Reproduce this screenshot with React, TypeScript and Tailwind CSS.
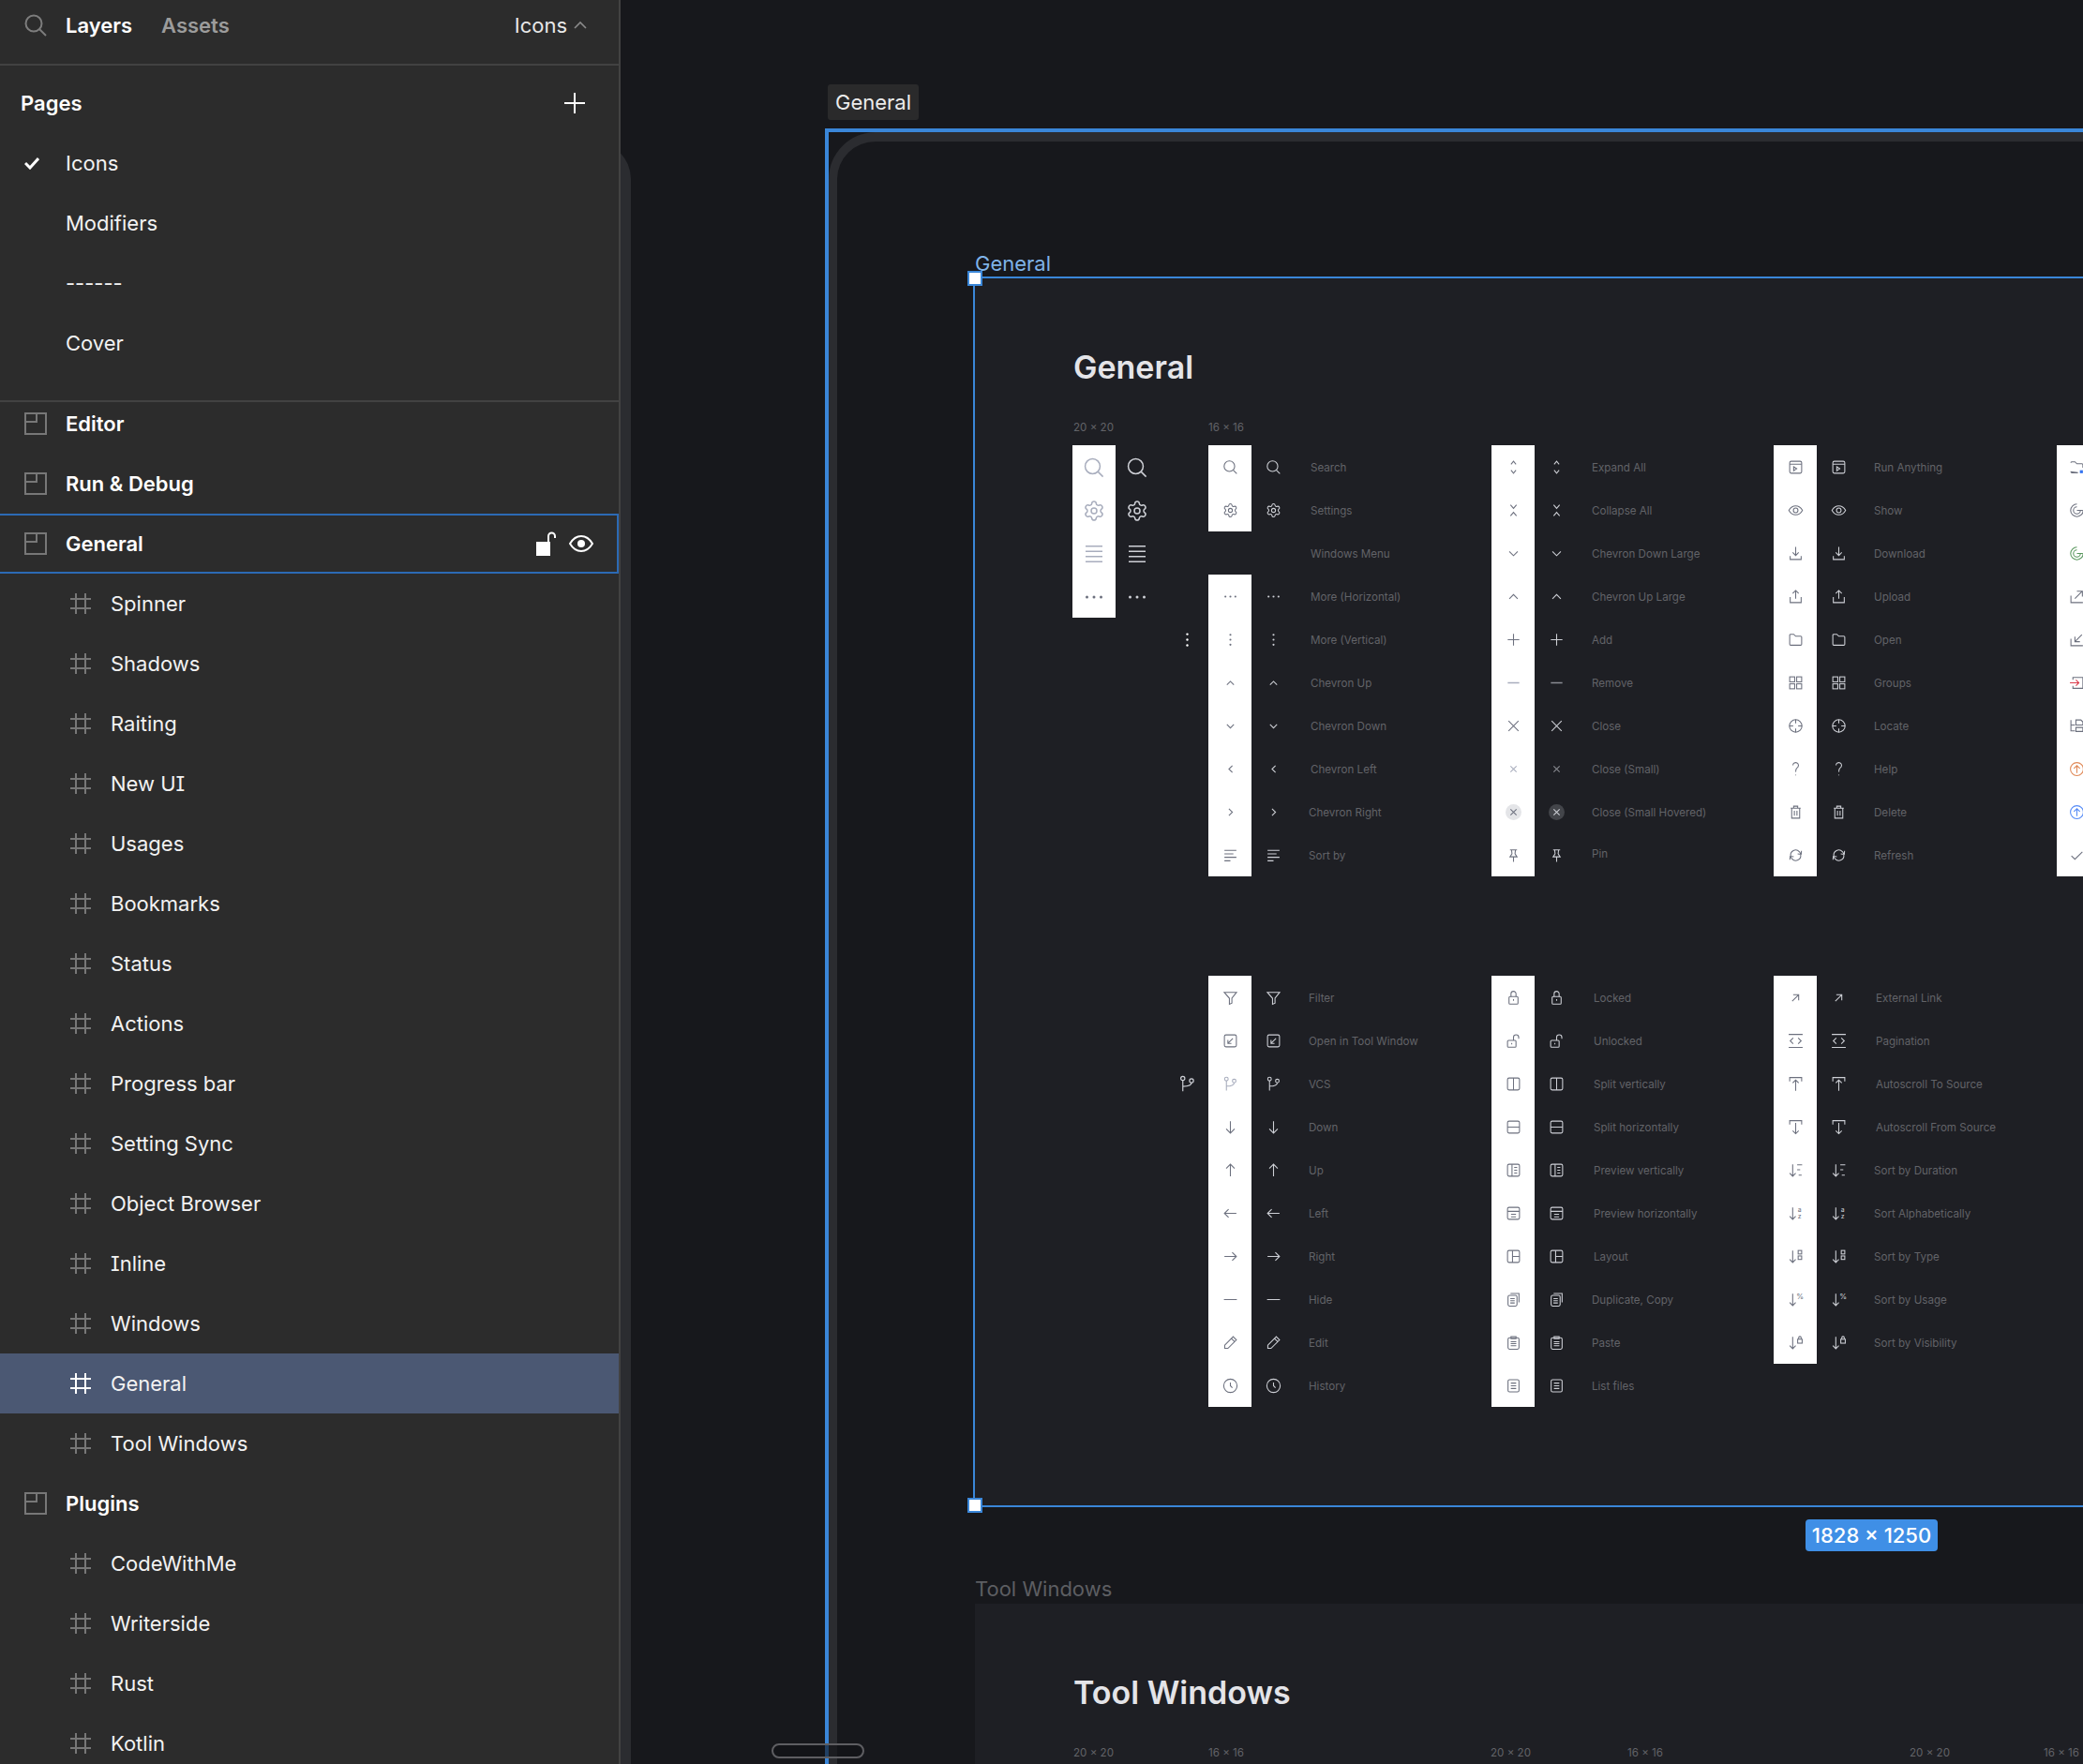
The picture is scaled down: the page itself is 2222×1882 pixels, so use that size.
import React from 'react';

// Icon strokes, all on a 16 x 16 grid
const folder = 'M2 3.5a1 1 0 0 1 1-1h3l2 2h5a1 1 0 0 1 1 1v7a1 1 0 0 1-1 1H3a1 1 0 0 1-1-1z';
const sortArrow = 'M5 2v12M2 11l3 3 3-3';
const box = <rect x="2" y="2" width="12" height="12" rx="1.5" />;

const glyphs: Record<string, React.ReactNode> = {
  search: <><circle cx="7" cy="7" r="5.3" /><path d="M10.9 10.9 14.4 14.4" /></>,
  settings: (
    <g transform="scale(0.667)" strokeWidth="1.5">
      <path d="M9.671 4.136a2.34 2.34 0 0 1 4.659 0 2.34 2.34 0 0 0 3.319 1.915 2.34 2.34 0 0 1 2.33 4.033 2.34 2.34 0 0 0 0 3.831 2.34 2.34 0 0 1-2.33 4.033 2.34 2.34 0 0 0-3.319 1.915 2.34 2.34 0 0 1-4.659 0 2.34 2.34 0 0 0-3.32-1.915 2.34 2.34 0 0 1-2.33-4.033 2.34 2.34 0 0 0 0-3.831A2.34 2.34 0 0 1 6.35 6.051a2.34 2.34 0 0 0 3.32-1.915" />
      <circle cx="12" cy="12" r="3" />
    </g>
  ),
  menu: <path d="M2 2.5h12M2 6.2h12M2 9.8h12M2 13.5h12" />,
  moreH: <g fill="currentColor" stroke="none"><circle cx="3" cy="8" r="1" /><circle cx="8" cy="8" r="1" /><circle cx="13" cy="8" r="1" /></g>,
  moreV: <g fill="currentColor" stroke="none"><circle cx="8" cy="3" r="1" /><circle cx="8" cy="8" r="1" /><circle cx="8" cy="13" r="1" /></g>,
  chevronUp: <path d="M4.5 10 8 6.5l3.5 3.5" />,
  chevronDown: <path d="M4.5 6.5 8 10l3.5-3.5" />,
  chevronLeft: <path d="M10 4.5 6.5 8l3.5 3.5" />,
  chevronRight: <path d="M6.5 4.5 10 8l-3.5 3.5" />,
  sortBy: <path d="M2 3h12M2 6.5h9M2 10h12M2 13.5h6" />,
  expandAll: <path d="M5.5 5 8 2l2.5 3M5.5 11 8 14l2.5-3" />,
  collapseAll: <path d="M5 2.5 8 6l3-3.5M5 13.5 8 10l3 3.5" />,
  chevronDownLarge: <path d="M3.8 6 8 10.2 12.2 6" />,
  chevronUpLarge: <path d="M3.8 10.2 8 6l4.2 4.2" />,
  add: <path d="M8 2.2v11.6M2.2 8h11.6" />,
  remove: <path d="M2.2 8h11.6" strokeWidth="1.4" />,
  close: <path d="M3 3l10 10M13 3 3 13" />,
  closeSmall: <path d="M5 5l6 6M11 5l-6 6" />,
  pin: <path d="M4.5 2.5h7M6 2.5l.5 4-2 3h7l-2-3 .5-4M8 9.5V14.5" />,
  runAnything: <><rect x="2" y="2" width="12" height="12" rx="1.5" /><path d="M2 5h12M6 7.5l3 2-3 2z" /></>,
  show: <><path d="M1.2 8C2.8 5 5.2 3.5 8 3.5s5.2 1.5 6.8 4.5c-1.6 3-4 4.5-6.8 4.5S2.8 11 1.2 8z" /><circle cx="8" cy="8" r="2.3" /></>,
  download: <path d="M8 1.5v8.5M5 7l3 3 3-3M2.5 10.5V14h11v-3.5" />,
  upload: <path d="M8 10V1.8M5 4.8l3-3 3 3M2.5 8.5V14h11V8.5" />,
  open: <path d={folder} />,
  groups: <><rect x="2" y="2" width="5" height="5" /><rect x="9" y="2" width="5" height="5" /><rect x="2" y="9" width="5" height="5" /><rect x="9" y="9" width="5" height="5" /></>,
  locate: <><circle cx="8" cy="8" r="6.3" /><path d="M8 1.7v3.8M8 10.5v3.8M1.7 8h3.8M10.5 8h3.8" /></>,
  help: <path d="M5.2 4.3a2.8 2.8 0 1 1 4.3 2.4C8.4 7.5 8 8.5 8 10.8M8 13.6v.8" />,
  delete: <path d="M3 4h10M6 4V2h4v2M4 4v10h8V4M6.7 6.5v5M9.3 6.5v5" />,
  refresh: <path d="M3 8.5a5 5 0 0 1 8.6-4.2L13.5 7M13.8 3.5 13.5 7 10 6.5M13 7.5a5 5 0 0 1-8.6 4.2L2.5 9M2.2 12.5 2.5 9 6 9.5" />,
  folderDot: <><path d="M2 3.5a1 1 0 0 1 1-1h3l2 2h5a1 1 0 0 1 1 1v3M9 13.5H3a1 1 0 0 1-1-1z" /><rect x="11" y="11" width="3" height="3" fill="#3574f0" stroke="none" /></>,
  coverage: <><path d="M8 1.7a6.3 6.3 0 1 0 6.3 6.3" /><path d="M8 4.5A3.5 3.5 0 1 0 11.5 8M8 8h6" /></>,
  coverageOn: <g stroke="#57965c"><path d="M8 1.7a6.3 6.3 0 1 0 6.3 6.3" /><path d="M8 4.5A3.5 3.5 0 1 0 11.5 8M8 8h6" /></g>,
  exportOut: <path d="M2 7v7h12M6 10l7-7M8 2.5h5.5V8" />,
  importIn: <path d="M2 7v7h12M13 3l-7 7M6 5v5h5" />,
  loginRed: <><path d="M4 5V2.5h10v11H4V11" /><path d="M1 8h9M7 5l3 3-3 3" stroke="#db3b4b" /></>,
  hierarchy: <path d="M2 2v11h4M2 7h4M7 2h5l2 2v3H7zM7 9.5h7v4H7z" />,
  upOrange: <><circle cx="8" cy="8" r="6.5" stroke="#e08855" /><path d="M8 12V4.5M5 7.5l3-3 3 3" stroke="#e08855" /></>,
  upBlue: <><circle cx="8" cy="8" r="6.5" stroke="#548af7" /><path d="M8 12V4.5M5 7.5l3-3 3 3" stroke="#548af7" /></>,
  check: <path d="M2.5 8.5 6 12l7.5-7.5" />,
  filter: <path d="M1.8 2.5h12.4L9.5 8.5v4.8L7 14.5V8.5z" />,
  openTool: <>{box}<path d="M10.5 5.5l-5 5M5.5 7v3.5H9" /></>,
  vcs: <><circle cx="4" cy="3" r="1.8" /><circle cx="11.8" cy="5" r="1.8" /><path d="M4 4.8v9.7M11.8 6.8c0 2.6-3 3.4-7.8 3.4" /></>,
  down: <path d="M8 2v12M3.8 9.8 8 14l4.2-4.2" />,
  up: <path d="M8 14V2M3.8 6.2 8 2l4.2 4.2" />,
  left: <path d="M14 8H2M6.2 3.8 2 8l4.2 4.2" />,
  right: <path d="M2 8h12M9.8 3.8 14 8l-4.2 4.2" />,
  hide: <path d="M1.5 8h13" />,
  edit: <path d="M10.8 2 14 5.2 5.5 13.7H2.3v-3.2zM9 3.8l3.2 3.2" />,
  history: <><circle cx="8" cy="8" r="6.7" /><path d="M8 4.8V8l2 2" /></>,
  locked: <><rect x="3.5" y="6.8" width="9" height="7.5" rx="1" /><path d="M5.5 6.8V4a2.5 2.5 0 0 1 5 0v2.8M8 9.5v1.6" /></>,
  unlocked: <><rect x="2" y="7.5" width="8.5" height="6.8" rx="1" /><path d="M8 7.5V4.5a2.6 2.6 0 0 1 5.2 0v1.3M6.2 10v1.6" /></>,
  splitV: <>{box}<path d="M8 2v12" /></>,
  splitH: <>{box}<path d="M2 8h12" /></>,
  previewV: <>{box}<path d="M6.5 2v12M8.7 5.2h3M8.7 8h3M8.7 10.8h3" /></>,
  previewH: <>{box}<path d="M2 6h12M5.5 9h5M5.5 11.5h5" /></>,
  layout: <>{box}<path d="M7 2v12M7 8h7" /></>,
  duplicate: <><rect x="2.5" y="3.8" width="9" height="10.7" rx="1.5" /><path d="M5 1.8h8.5v9M4.8 7h4.4M4.8 9.2h4.4M4.8 11.4h4.4" /></>,
  paste: <><rect x="2.5" y="3" width="11" height="11.5" rx="1.5" /><path d="M5.5 1.8h5V4h-5zM5.2 7h5.6M5.2 9h5.6M5.2 11h5.6" /></>,
  listFiles: <><rect x="2.5" y="1.8" width="11" height="12.4" rx="1.5" /><path d="M5.3 5.3h5.4M5.3 8h5.4M5.3 10.7h5.4" /></>,
  external: <path d="M4.5 11.5l6.5-6.5M5.5 5H11v5.5" />,
  pagination: <path d="M1 1.5h14M1 14.5h14M5.5 5 2.5 8l3 3M10.5 5l3 3-3 3" />,
  autoscrollTo: <path d="M2 5.5v-4h12v4M8 14.8V4M5 7l3-3 3 3" />,
  autoscrollFrom: <path d="M2 5.5v-4h12v4M8 3.8v10.8M5 11.6l3 3 3-3" />,
  sortDuration: <path d={sortArrow + 'M9.5 2.5h5M9.5 7.5h3M11 13h3'} />,
  sortAlpha: <><path d={sortArrow} /><text x="10" y="7" fontSize="6.5" fill="currentColor" stroke="none" fontFamily="Inter, sans-serif">a</text><text x="10" y="13.5" fontSize="6.5" fill="currentColor" stroke="none" fontFamily="Inter, sans-serif">z</text></>,
  sortType: <><path d={sortArrow} /><rect x="10.5" y="2" width="3.5" height="3.5" /><rect x="10.5" y="7.5" width="3.5" height="3.5" /></>,
  sortUsage: <><path d={sortArrow} /><text x="8.8" y="7.5" fontSize="7.5" fill="currentColor" stroke="none" fontFamily="Inter, sans-serif">%</text></>,
  sortVisibility: <><path d={sortArrow} /><rect x="10" y="4.5" width="4.5" height="4" /><path d="M11 4.5V3a1.2 1.2 0 0 1 2.5 0v1.5" /></>,
};

function Icon({ name, large }: { name: string; large?: boolean }) {
  return (
    <svg
      viewBox="0 0 16 16"
      fill="none"
      stroke="currentColor"
      strokeWidth="1"
      className={large ? 'h-[24px] w-[24px]' : 'h-[19px] w-[19px]'}
    >
      {glyphs[name]}
    </svg>
  );
}

interface Item {
  icon?: string;
  label?: string;
  pad?: string;
  soft?: boolean;
  pale?: boolean;
  hover?: boolean;
}

// white swatch, dark swatch, caption
function IconRow({ item }: { item: Item }) {
  return (
    <div className="flex h-[46px] items-center">
      <div className={`flex h-[46px] w-[46px] items-center justify-center pt-px ${item.icon ? 'bg-white' : ''} ${item.soft || item.pale ? 'text-[#a8adbd]' : 'text-[#6c707e]'}`}>
        {item.icon && (
          <span className={`flex h-[17px] w-[17px] items-center justify-center ${item.hover ? 'rounded-full bg-[#e4e5e8]' : ''}`}>
            <Icon name={item.icon} />
          </span>
        )}
      </div>
      <div className={`flex h-[46px] w-[46px] items-center justify-center pt-px ${item.soft ? 'text-[#8b8d93]' : 'text-[#ced0d6]'}`}>
        {item.icon && (
          <span className={`flex h-[17px] w-[17px] items-center justify-center ${item.hover ? 'rounded-full bg-[#43454a]' : ''}`}>
            <Icon name={item.icon} />
          </span>
        )}
      </div>
      <span className={`mt-[3px] whitespace-nowrap text-[11.6px] leading-none text-[#626368] ${item.pad ?? 'pl-[15px]'}`}>{item.label}</span>
    </div>
  );
}

function IconColumn({ items, width }: { items: Item[]; width: string }) {
  return (
    <div className={`flex shrink-0 flex-col ${width}`}>
      {items.map((item, i) => (
        <IconRow key={i} item={item} />
      ))}
    </div>
  );
}

const sizeOne: Item[] = [
  { icon: 'search', label: 'Search', pad: 'pl-[17px]' },
  { icon: 'settings', label: 'Settings', pad: 'pl-[17px]' },
  { label: 'Windows Menu', pad: 'pl-[17px]' },
  { icon: 'moreH', label: 'More (Horizontal)', pad: 'pl-[17px]' },
  { icon: 'moreV', label: 'More (Vertical)', pad: 'pl-[17px]' },
  { icon: 'chevronUp', label: 'Chevron Up', pad: 'pl-[17px]' },
  { icon: 'chevronDown', label: 'Chevron Down', pad: 'pl-[17px]' },
  { icon: 'chevronLeft', label: 'Chevron Left', pad: 'pl-[17px]' },
  { icon: 'chevronRight', label: 'Chevron Right' },
  { icon: 'sortBy', label: 'Sort by' },
];

const sizeTwo: Item[] = [
  { icon: 'expandAll', label: 'Expand All' },
  { icon: 'collapseAll', label: 'Collapse All' },
  { icon: 'chevronDownLarge', label: 'Chevron Down Large' },
  { icon: 'chevronUpLarge', label: 'Chevron Up Large' },
  { icon: 'add', label: 'Add' },
  { icon: 'remove', label: 'Remove', soft: true },
  { icon: 'close', label: 'Close' },
  { icon: 'closeSmall', label: 'Close (Small)', soft: true },
  { icon: 'closeSmall', label: 'Close (Small Hovered)', hover: true },
  { icon: 'pin', label: 'Pin', pad: 'pl-[15px] -translate-y-[2px]' },
];

const sizeThree: Item[] = [
  { icon: 'runAnything', label: 'Run Anything' },
  { icon: 'show', label: 'Show' },
  { icon: 'download', label: 'Download' },
  { icon: 'upload', label: 'Upload' },
  { icon: 'open', label: 'Open' },
  { icon: 'groups', label: 'Groups' },
  { icon: 'locate', label: 'Locate' },
  { icon: 'help', label: 'Help' },
  { icon: 'delete', label: 'Delete' },
  { icon: 'refresh', label: 'Refresh' },
];

const sizeFour: Item[] = [
  { icon: 'folderDot' },
  { icon: 'coverage' },
  { icon: 'coverageOn' },
  { icon: 'exportOut' },
  { icon: 'importIn' },
  { icon: 'loginRed' },
  { icon: 'hierarchy' },
  { icon: 'upOrange' },
  { icon: 'upBlue' },
  { icon: 'check' },
];

const lowerOne: Item[] = [
  { icon: 'filter', label: 'Filter' },
  { icon: 'openTool', label: 'Open in Tool Window' },
  { icon: 'vcs', label: 'VCS', pale: true },
  { icon: 'down', label: 'Down' },
  { icon: 'up', label: 'Up' },
  { icon: 'left', label: 'Left' },
  { icon: 'right', label: 'Right' },
  { icon: 'hide', label: 'Hide' },
  { icon: 'edit', label: 'Edit' },
  { icon: 'history', label: 'History' },
];

const lowerTwo: Item[] = [
  { icon: 'locked', label: 'Locked', pad: 'pl-[17px]' },
  { icon: 'unlocked', label: 'Unlocked', pad: 'pl-[17px]' },
  { icon: 'splitV', label: 'Split vertically', pad: 'pl-[17px]' },
  { icon: 'splitH', label: 'Split horizontally', pad: 'pl-[17px]' },
  { icon: 'previewV', label: 'Preview vertically', pad: 'pl-[17px]' },
  { icon: 'previewH', label: 'Preview horizontally', pad: 'pl-[17px]' },
  { icon: 'layout', label: 'Layout', pad: 'pl-[17px]' },
  { icon: 'duplicate', label: 'Duplicate, Copy' },
  { icon: 'paste', label: 'Paste' },
  { icon: 'listFiles', label: 'List files' },
];

const lowerThree: Item[] = [
  { icon: 'external', label: 'External Link', pad: 'pl-[17px]' },
  { icon: 'pagination', label: 'Pagination', pad: 'pl-[17px]' },
  { icon: 'autoscrollTo', label: 'Autoscroll To Source', pad: 'pl-[17px]' },
  { icon: 'autoscrollFrom', label: 'Autoscroll From Source', pad: 'pl-[17px]' },
  { icon: 'sortDuration', label: 'Sort by Duration' },
  { icon: 'sortAlpha', label: 'Sort Alphabetically' },
  { icon: 'sortType', label: 'Sort by Type' },
  { icon: 'sortUsage', label: 'Sort by Usage' },
  { icon: 'sortVisibility', label: 'Sort by Visibility' },
];

const largeIcons = ['search', 'settings', 'menu', 'moreH'];

const frames = [
  'Spinner', 'Shadows', 'Raiting', 'New UI', 'Usages', 'Bookmarks', 'Status', 'Actions',
  'Progress bar', 'Setting Sync', 'Object Browser', 'Inline', 'Windows', 'General', 'Tool Windows',
];
const pluginFrames = ['CodeWithMe', 'Writerside', 'Rust', 'Kotlin'];

function SectionIcon() {
  return (
    <svg viewBox="0 0 24 24" fill="none" stroke="#777" strokeWidth="2" className="h-[24px] w-[24px] shrink-0">
      <rect x="1" y="1" width="22" height="22" />
      <path d="M13 1v9H1" />
    </svg>
  );
}

function FrameIcon({ active }: { active?: boolean }) {
  return (
    <svg viewBox="0 0 24 24" fill="none" stroke={active ? '#fff' : '#777'} strokeWidth="2" className="h-[24px] w-[24px] shrink-0">
      <path d="M7 1v22M17 1v22M1 7h22M1 17h22" />
    </svg>
  );
}

function SectionRow({ label, children, active }: { label: string; children?: React.ReactNode; active?: boolean }) {
  return (
    <div className={`flex h-16 items-center pl-[26px] pr-[25px] ${active ? 'border-2 border-l-0 border-[#2c6ab4]' : ''}`}>
      <SectionIcon />
      <span className="ml-[20px] text-[22px] font-semibold text-white">{label}</span>
      {children}
    </div>
  );
}

function FrameRow({ label, active }: { label: string; active?: boolean }) {
  return (
    <div className={`flex h-16 items-center pl-[74px] ${active ? 'bg-[#4b5873]' : ''}`}>
      <FrameIcon active={active} />
      <span className="ml-[20px] text-[22px] text-[#f2f2f2] [font-feature-settings:'cv08']">{label}</span>
    </div>
  );
}

function Sidebar() {
  return (
    <aside className="z-10 flex h-full w-[662px] shrink-0 flex-col border-r-2 border-[#424242] bg-[#2c2c2c]">
      <div className="flex h-[70px] shrink-0 items-center border-b-2 border-[#424242] pb-[14px] pl-[26px] pr-[34px]">
        <svg viewBox="0 0 24 24" fill="none" stroke="#7d7d7d" strokeWidth="2" className="h-[24px] w-[24px]">
          <circle cx="10" cy="10" r="8.5" />
          <path d="M16 16l7 7" />
        </svg>
        <span className="ml-[20px] text-[22px] font-semibold text-white">Layers</span>
        <span className="ml-[31px] text-[22px] font-semibold text-[#9c9c9c]">Assets</span>
        <span className="ml-auto text-[22px] text-[#e8e8e8]">Icons</span>
        <svg viewBox="0 0 14 10" fill="none" stroke="#8a8a8a" strokeWidth="1.6" className="ml-[7px] h-[10px] w-[14px]">
          <path d="M1 8l6-6 6 6" />
        </svg>
      </div>

      <div className="shrink-0 border-b-2 border-[#424242] pb-[29px] pt-[8px]">
        <div className="flex h-16 items-center justify-between pl-[22px] pr-[36px]">
          <span className="text-[22px] font-semibold text-white">Pages</span>
          <svg viewBox="0 0 22 22" fill="none" stroke="#fff" strokeWidth="2" className="h-[22px] w-[22px]">
            <path d="M11 0v22M0 11h22" />
          </svg>
        </div>
        <div className="flex h-16 items-center pl-[26px]">
          <svg viewBox="0 0 16 14" fill="none" stroke="#fff" strokeWidth="3" className="h-[14px] w-[16px]">
            <path d="M1 7l5 5 9-10" />
          </svg>
          <span className="ml-[28px] text-[22px] text-[#f2f2f2]">Icons</span>
        </div>
        {['Modifiers', '------', 'Cover'].map((page) => (
          <div key={page} className="flex h-16 items-center pl-[70px] text-[22px] text-[#f2f2f2]">{page}</div>
        ))}
      </div>

      <div className="min-h-0 flex-1 overflow-hidden">
        <div className="-mt-[9px]">
          <SectionRow label="Editor" />
          <SectionRow label="Run & Debug" />
          <SectionRow label="General" active>
            <svg viewBox="0 0 22 26" fill="none" className="ml-auto h-[26px] w-[22px]">
              <rect x="0" y="11" width="15" height="15" fill="#fff" />
              <path d="M13 11V5a3.5 3.5 0 0 1 7 0v2" stroke="#fff" strokeWidth="2" />
            </svg>
            <svg viewBox="0 0 26 18" fill="none" className="ml-[13px] h-[18px] w-[26px]">
              <path d="M1 9c3-5 7-8 12-8s9 3 12 8c-3 5-7 8-12 8S4 14 1 9z" stroke="#fff" strokeWidth="2" />
              <circle cx="13" cy="9" r="4" fill="#fff" />
            </svg>
          </SectionRow>
          {frames.map((frame) => (
            <FrameRow key={frame} label={frame} active={frame === 'General'} />
          ))}
          <SectionRow label="Plugins" />
          {pluginFrames.map((frame) => (
            <FrameRow key={frame} label={frame} />
          ))}
        </div>
      </div>
    </aside>
  );
}

function Heading({ title }: { title: string }) {
  return <h2 className="h-[40px] text-[34px] font-semibold leading-[40px] text-[#e4e4e8]">{title}</h2>;
}

function SizeLabel({ text, width }: { text: string; width: string }) {
  return <span className={`shrink-0 text-[11.6px] leading-[16px] text-[#626368] ${width}`}>{text}</span>;
}

function GeneralFrame() {
  return (
    <section className="absolute left-[376px] right-0 top-[295px] h-[1313px] border-y-2 border-l-2 border-[#3a86d8] bg-[#1e1f24] pl-[104px] pt-[75px]">
      <div className="pl-px">
        <Heading title="General" />
      </div>
      <div className="mt-[36px] flex pl-px">
        <SizeLabel text="20 × 20" width="w-[144px]" />
        <SizeLabel text="16 × 16" width="w-[145px]" />
      </div>
      <div className="mt-[11px] flex">
        <div className="flex w-[145px] shrink-0 items-start">
          <div className="flex w-[46px] flex-col bg-white text-[#a8adbd]">
            {largeIcons.map((name) => (
              <div key={name} className={`flex h-[46px] items-center justify-center pt-px ${name === 'moreH' ? 'text-[#6c707e]' : ''}`}>
                <Icon name={name} large />
              </div>
            ))}
          </div>
          <div className="flex w-[46px] flex-col text-[#ced0d6]">
            {largeIcons.map((name) => (
              <div key={name} className="flex h-[46px] items-center justify-center pt-px">
                <Icon name={name} large />
              </div>
            ))}
          </div>
          <div className="ml-[7px] mt-[184px] flex h-[46px] w-[46px] items-center justify-center pt-px text-white">
            <Icon name="moreV" />
          </div>
        </div>
        <IconColumn items={sizeOne} width="w-[302px]" />
        <IconColumn items={sizeTwo} width="w-[301px]" />
        <IconColumn items={sizeThree} width="w-[302px]" />
        <IconColumn items={sizeFour} width="w-[100px]" />
      </div>
      <div className="mt-[106px] flex">
        <div className="w-[145px] shrink-0">
          <div className="ml-[99px] mt-[92px] flex h-[46px] w-[46px] items-center justify-center pt-px text-[#ced0d6]">
            <Icon name="vcs" />
          </div>
        </div>
        <IconColumn items={lowerOne} width="w-[302px]" />
        <IconColumn items={lowerTwo} width="w-[301px]" />
        <IconColumn items={lowerThree} width="w-[302px]" />
      </div>
    </section>
  );
}

function ToolWindowsFrame() {
  return (
    <section className="absolute bottom-0 left-[378px] right-0 top-[1711px] bg-[#1e1f24] pl-[104px] pt-[75px]">
      <div className="pl-px">
        <Heading title="Tool Windows" />
      </div>
      <div className="mt-[36px] flex pl-px">
        <SizeLabel text="20 × 20" width="w-[144px]" />
        <SizeLabel text="16 × 16" width="w-[301px]" />
        <SizeLabel text="20 × 20" width="w-[146px]" />
        <SizeLabel text="16 × 16" width="w-[301px]" />
        <SizeLabel text="20 × 20" width="w-[143px]" />
        <SizeLabel text="16 × 16" width="w-[60px]" />
      </div>
    </section>
  );
}

export default function App() {
  return (
    <div className="flex h-[1882px] w-[2222px] overflow-hidden bg-[#17181c] font-[Inter,sans-serif]">
      <Sidebar />
      <main className="relative min-w-0 flex-1 overflow-hidden">
        {/* neighbouring frame, its rounded corner peeks out from under the sidebar */}
        <div className="absolute -left-[60px] bottom-0 top-[151px] w-[71px] rounded-tr-[40px] bg-[#2b2c30]" />

        <div className="absolute left-[221px] top-[90px] flex h-[38px] w-[97px] items-center justify-center rounded-[3px] bg-[#2a2a2b] text-[22px] text-[#ececec]">
          General
        </div>

        {/* selected section */}
        <div className="absolute -bottom-[40px] -right-[40px] left-[218px] top-[137px] border-l-4 border-t-4 border-[#3a86d8]">
          <div className="absolute inset-0 rounded-tl-[50px] border-l-[9px] border-t-[10px] border-[#2b2c30]" />
        </div>

        <div className="absolute left-[378px] top-[266px] text-[22px] leading-[30px] text-[#7fb3e8]">General</div>
        <GeneralFrame />
        <div className="absolute left-[370px] top-[289px] h-[16px] w-[16px] border-2 border-[#3a86d8] bg-white" />
        <div className="absolute left-[370px] top-[1598px] h-[16px] w-[16px] border-2 border-[#3a86d8] bg-white" />
        <div className="absolute left-[1264px] top-[1621px] flex h-[34px] w-[141px] items-center justify-center rounded-[4px] bg-[#3f8fe6] text-[22px] font-medium text-white">
          1828 × 1250
        </div>

        <div className="absolute left-[378px] top-[1680px] text-[22px] leading-[30px] text-[#5d5e62]">Tool Windows</div>
        <ToolWindowsFrame />

        {/* scrollbar */}
        <div className="absolute left-[161px] top-[1860px] h-[16px] w-[99px] rounded-full border-2 border-[#5e5e62] bg-[#111216]/60" />
      </main>
    </div>
  );
}
